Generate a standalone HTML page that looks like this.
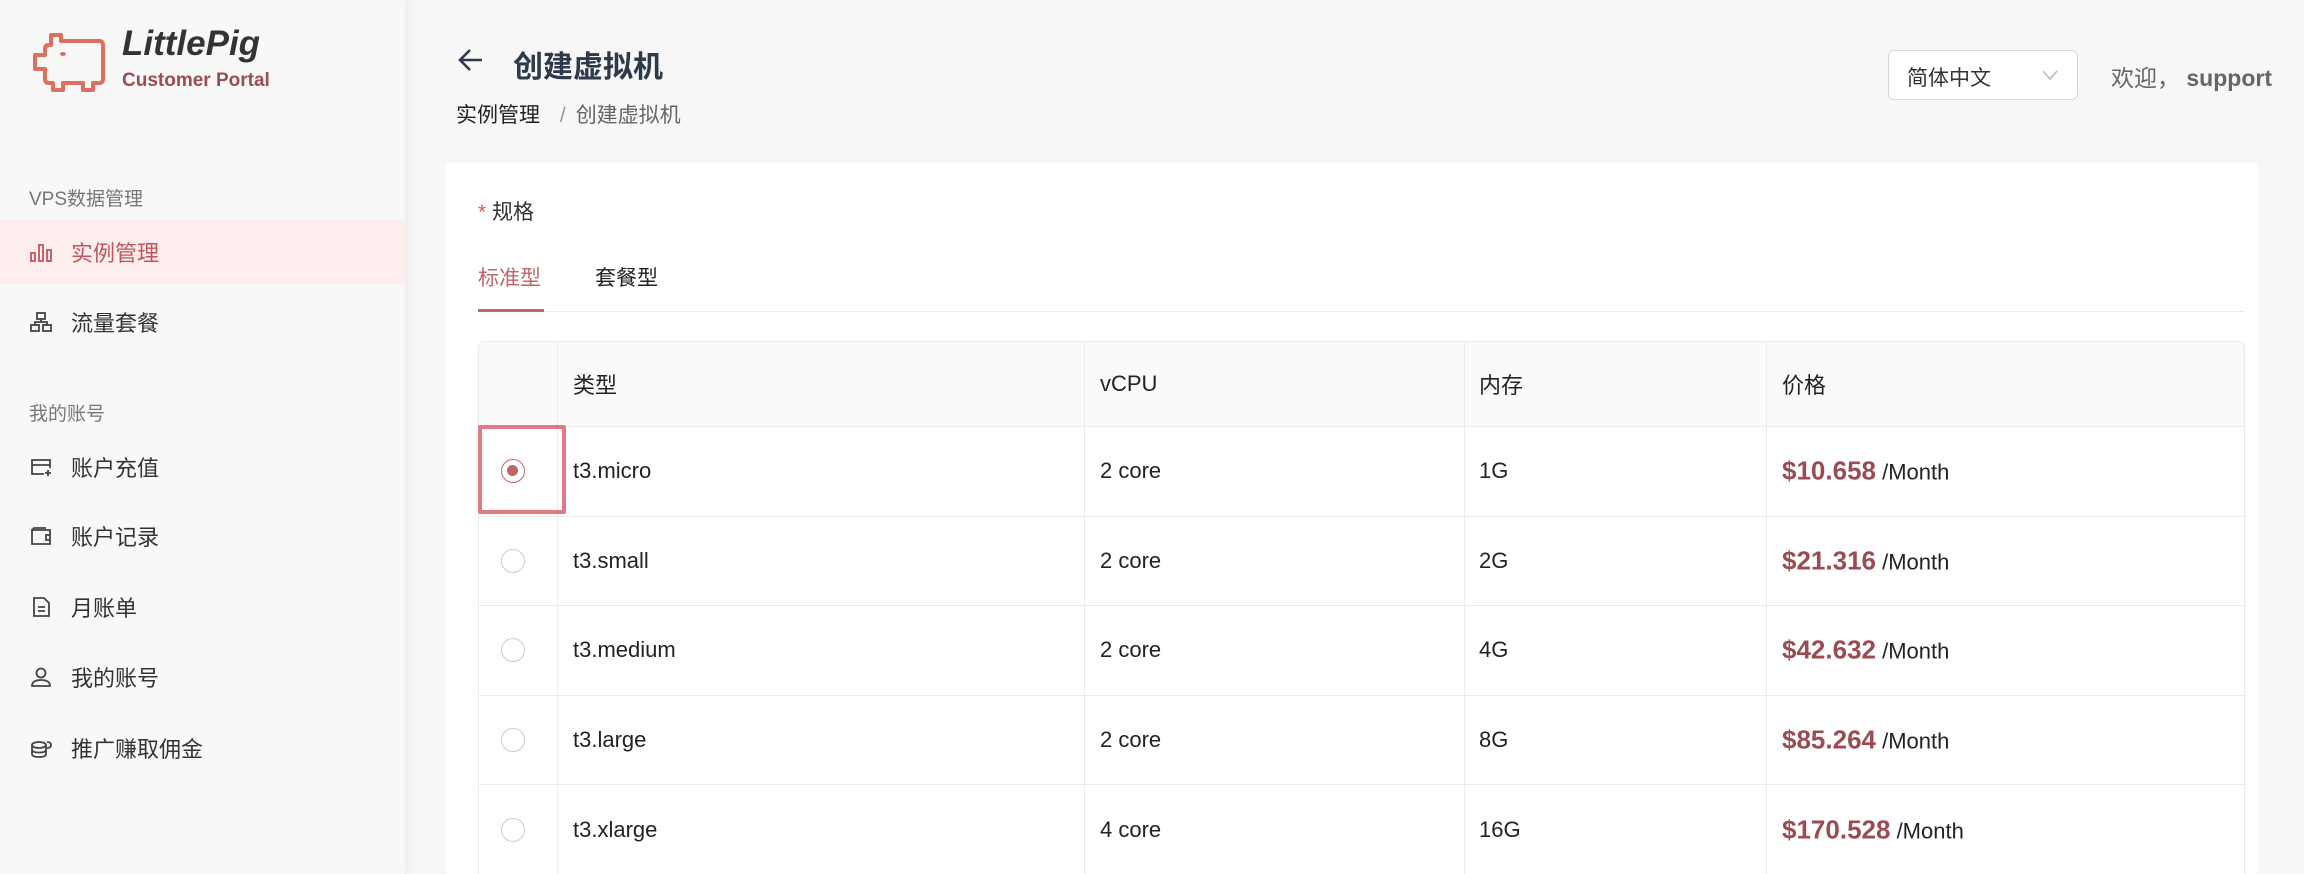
<!DOCTYPE html>
<html style="overflow:hidden;width:2304px;height:874px"><head><meta charset="utf-8"><style>
*{margin:0;padding:0;box-sizing:border-box}
body{width:2304px;height:874px;overflow:hidden;background:#f7f7f7;font-family:"Liberation Sans","Noto Sans CJK SC",sans-serif;color:#222;position:relative}
#wrap{position:absolute;left:0;top:0;width:2304px;height:874px;overflow:hidden}
.side{position:absolute;left:0;top:0;width:406px;height:874px;background:#f8f8f8;box-shadow:2px 0 8px rgba(0,0,0,.05);border-right:1px solid #eee}
.abs{position:absolute;white-space:nowrap}
.grp{font-size:19px;color:#777}
.item{position:absolute;left:0;width:406px;height:64px;font-size:22px;color:#333}
.item .t{position:absolute;left:71px;top:50%;transform:translateY(-50%)}
.item svg{position:absolute;left:29px;top:50%;transform:translateY(-50%)}
.card{position:absolute;left:445px;top:163px;width:1813px;height:711px;background:#fff;border-radius:4px}
.tbl{position:absolute;left:478px;top:341px;width:1767px;height:533px;border:1px solid #ebebeb;border-bottom:none;border-radius:6px 6px 0 0;overflow:hidden}
.row{position:relative;height:89.6px;border-top:1px solid #ebebeb;font-size:22px}
.row:first-child{border-top:none;background:#fafafa;height:84px}
.row span{position:absolute;top:50%;transform:translateY(-50%)}
.vl{position:absolute;top:341px;width:1px;height:533px;background:#ebebeb}
.radio{position:absolute;left:22px;width:24px;height:24px;border:1.5px solid #ccc;border-radius:50%;top:50%;transform:translateY(-50%)}
.p{color:#9a4c52;font-weight:bold;font-size:26px}
</style></head><body><div id="wrap">
<div class="side">
<svg class="abs" style="left:30px;top:30px" width="76" height="64" viewBox="0 0 76 64" fill="none" stroke="#de6e60" stroke-width="4" stroke-linejoin="round"><path d="M21 15 V5 H31 V11 H69 Q73 11 73 15 V49 Q73 53 69 53 H63 V60 H53 V53 H33 V60 H23 V53 H19 Q15 53 15 49 V39 H5 V25 H15 V19 Q15 15 19 15 Z"/><ellipse cx="33" cy="24" rx="3" ry="2" fill="#de6e60" stroke="none"/></svg>
<div class="abs" style="left:122px;top:24px;font-size:35px;font-weight:bold;font-style:italic;color:#333">LittlePig</div>
<div class="abs" style="left:122px;top:70px;font-size:19px;font-weight:bold;color:#9a4c52">Customer Portal</div>
<div class="abs grp" style="left:29px;top:184px">VPS数据管理</div>
<div class="item" style="top:220px;background:#fdeeed;color:#c0565a"><svg width="24" height="22" viewBox="0 0 24 22" fill="none" stroke="#c0565a" stroke-width="1.8"><rect x="2" y="12" width="4" height="8"/><rect x="10" y="4" width="4" height="16"/><rect x="18" y="9" width="4" height="11"/></svg><span class="t">实例管理</span></div>
<div class="item" style="top:290px"><svg width="24" height="22" viewBox="0 0 24 22" fill="none" stroke="#444" stroke-width="1.8"><rect x="8" y="2" width="8" height="6"/><rect x="2" y="14" width="8" height="6"/><rect x="14" y="14" width="8" height="6"/><path d="M12 8v3M6 14v-3h12v3"/></svg><span class="t">流量套餐</span></div>
<div class="abs grp" style="left:29px;top:399px">我的账号</div>
<div class="item" style="top:435px"><svg width="24" height="22" viewBox="0 0 24 22" fill="none" stroke="#444" stroke-width="1.8"><path d="M15 18H3V4h18v8M3 9h18M19 14v6M16 17h6"/></svg><span class="t">账户充值</span></div>
<div class="item" style="top:504px"><svg width="24" height="22" viewBox="0 0 24 22" fill="none" stroke="#444" stroke-width="1.8"><path d="M3 5h18v14H3zM3 5l2-2h12M21 10h-4v5h4"/></svg><span class="t">账户记录</span></div>
<div class="item" style="top:575px"><svg width="24" height="22" viewBox="0 0 24 22" fill="none" stroke="#444" stroke-width="1.8"><path d="M5 2h10l5 5v13H5zM9 11h7M9 15h7"/></svg><span class="t">月账单</span></div>
<div class="item" style="top:645px"><svg width="24" height="22" viewBox="0 0 24 22" fill="none" stroke="#444" stroke-width="1.8"><circle cx="12" cy="7" r="4.5"/><path d="M3 20q0-6 9-6t9 6z"/></svg><span class="t">我的账号</span></div>
<div class="item" style="top:716px"><svg width="24" height="22" viewBox="0 0 24 22" fill="none" stroke="#444" stroke-width="1.8"><ellipse cx="10" cy="8" rx="7" ry="3"/><path d="M3 8v9q0 3 7 3t7-3V8M3 12.5q0 3 7 3t7-3M18 5q4 0 4 3t-4 3"/></svg><span class="t">推广赚取佣金</span></div>
</div>
<svg class="abs" style="left:457px;top:46px" width="28" height="28" viewBox="0 0 28 28" fill="none" stroke="#2c3a4b" stroke-width="2.6"><path d="M25 14H4M13 4L3 14l10 10"/></svg>
<div class="abs" style="left:513px;top:42px;font-size:30px;font-weight:bold;color:#2c3a4b">创建虚拟机</div>
<div class="abs" style="left:456px;top:99px;font-size:21px;color:#222">实例管理 <span style="color:#999;margin:0 10px 0 14px">/</span><span style="color:#666">创建虚拟机</span></div>
<div class="abs" style="left:1888px;top:50px;width:190px;height:50px;background:#fff;border:1.5px solid #d8d8d8;border-radius:6px"><span class="abs" style="left:18px;top:11px;font-size:21px;color:#333">简体中文</span><svg class="abs" style="left:152px;top:18px" width="18" height="12" viewBox="0 0 18 12" fill="none" stroke="#bbb" stroke-width="1.6"><path d="M2 2l7 8 7-8"/></svg></div>
<div class="abs" style="left:2111px;top:59px;font-size:23px;color:#666">欢迎， <span style="font-weight:bold">support</span></div>
<div class="card"></div>
<div class="abs" style="left:478px;top:196px;font-size:21px;color:#333"><span style="color:#d05a5a">*</span> 规格</div>
<div class="abs" style="left:478px;top:262px;font-size:21px;color:#c0656a">标准型</div>
<div class="abs" style="left:595px;top:262px;font-size:21px;color:#222">套餐型</div>
<div class="abs" style="left:478px;top:311px;width:1767px;height:1px;background:#ececec"></div>
<div class="abs" style="left:478px;top:309px;width:66px;height:3px;background:#c0656a"></div>
<div class="tbl">
<div class="row"><span style="left:94px">类型</span><span style="left:621px">vCPU</span><span style="left:1000px">内存</span><span style="left:1303px">价格</span></div>
<div class="row"><div class="radio" style="border-color:#c0656a"><div style="position:absolute;left:5px;top:5px;width:11px;height:11px;border-radius:50%;background:#c0656a"></div></div><span style="left:94px">t3.micro</span><span style="left:621px">2 core</span><span style="left:1000px">1G</span><span style="left:1303px"><b class="p">$10.658</b> /Month</span></div>
<div class="row"><div class="radio"></div><span style="left:94px">t3.small</span><span style="left:621px">2 core</span><span style="left:1000px">2G</span><span style="left:1303px"><b class="p">$21.316</b> /Month</span></div>
<div class="row"><div class="radio"></div><span style="left:94px">t3.medium</span><span style="left:621px">2 core</span><span style="left:1000px">4G</span><span style="left:1303px"><b class="p">$42.632</b> /Month</span></div>
<div class="row"><div class="radio"></div><span style="left:94px">t3.large</span><span style="left:621px">2 core</span><span style="left:1000px">8G</span><span style="left:1303px"><b class="p">$85.264</b> /Month</span></div>
<div class="row"><div class="radio"></div><span style="left:94px">t3.xlarge</span><span style="left:621px">4 core</span><span style="left:1000px">16G</span><span style="left:1303px"><b class="p">$170.528</b> /Month</span></div>
</div>
<div class="vl" style="left:557px"></div><div class="vl" style="left:1084px"></div><div class="vl" style="left:1464px"></div><div class="vl" style="left:1766px"></div>
<div class="abs" style="left:478px;top:425px;width:88px;height:89px;border:4px solid #e07a84;border-radius:2px"></div>
</div></body></html>
